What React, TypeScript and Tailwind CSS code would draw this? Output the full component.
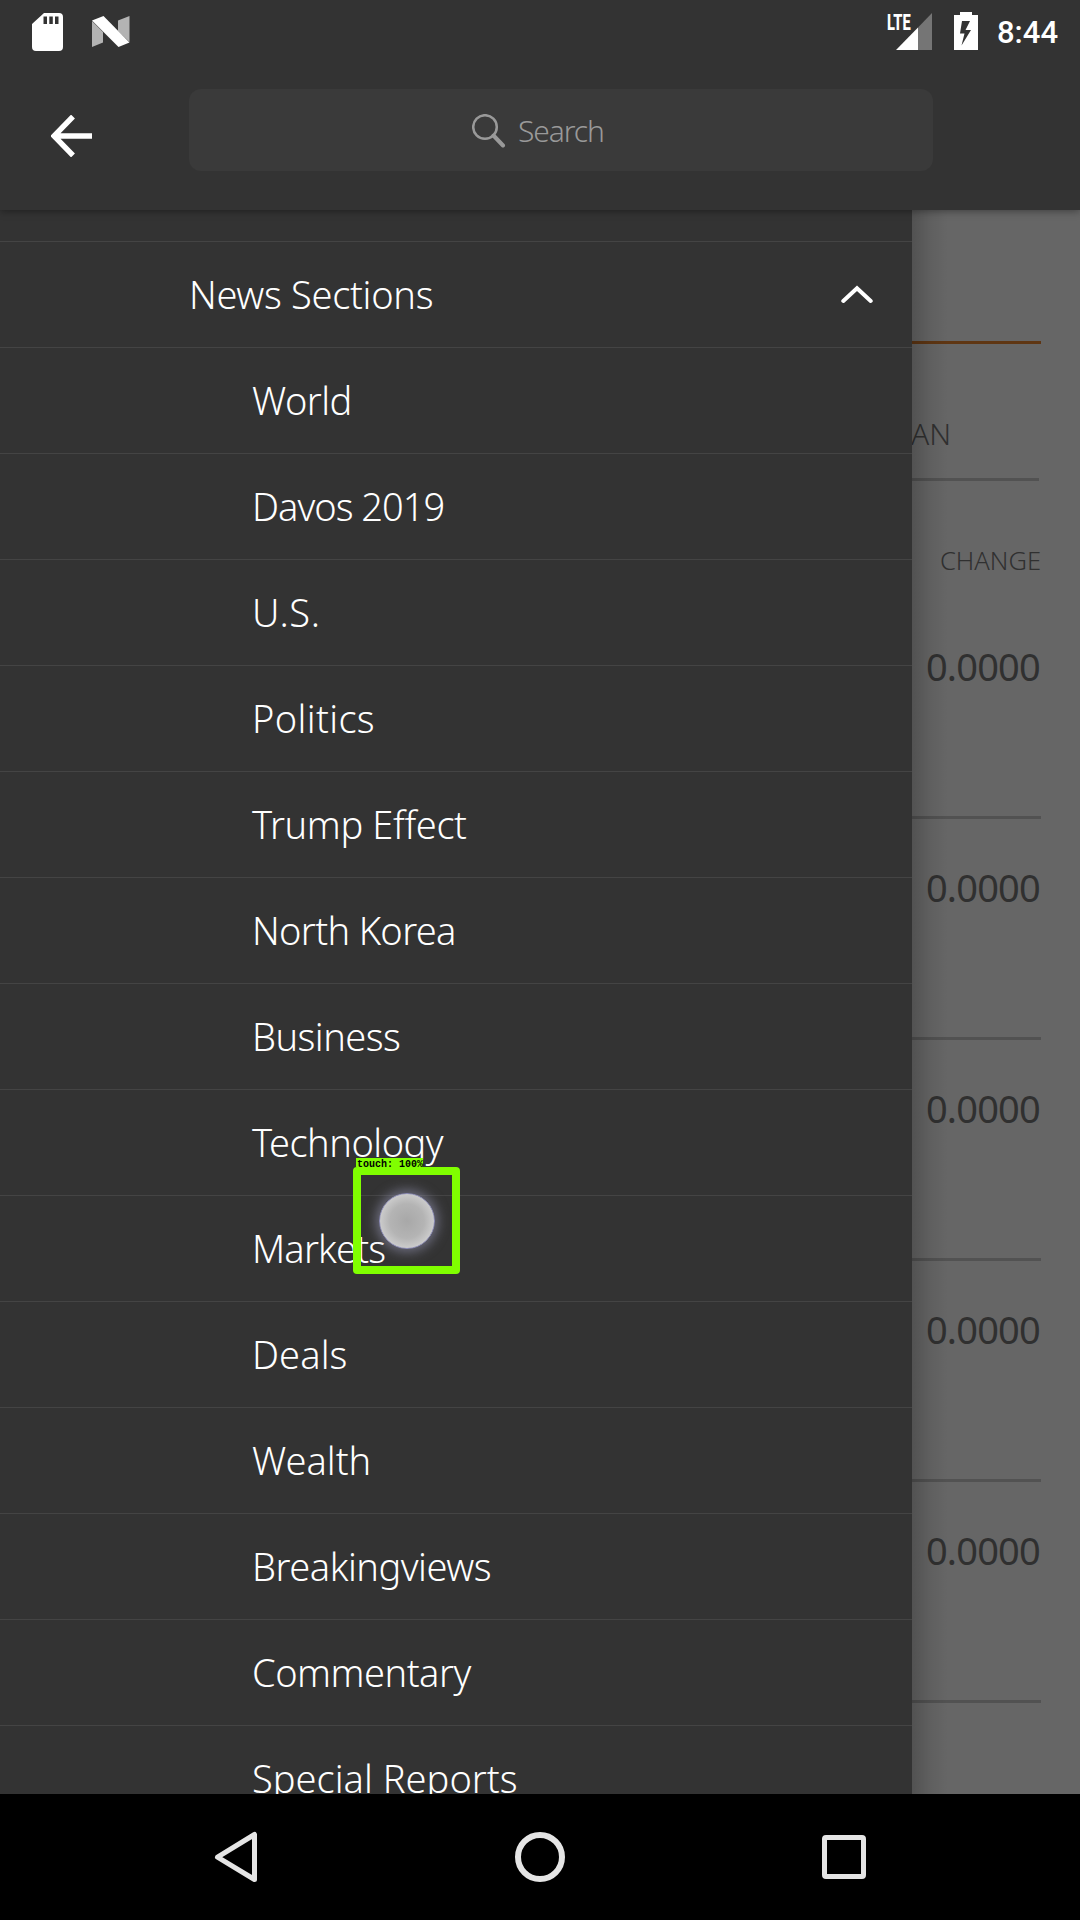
import React from "react";

const sections = [
  { label: "World", tracking: "tracking-[-0.55px]" },
  { label: "Davos 2019", tracking: "tracking-[-1px]" },
  { label: "U.S.", tracking: "tracking-[0.7px]" },
  { label: "Politics", tracking: "tracking-[0.35px]" },
  { label: "Trump Effect", tracking: "tracking-[-0.36px]" },
  { label: "North Korea", tracking: "tracking-[-0.65px]" },
  { label: "Business", tracking: "tracking-[-0.55px]" },
  { label: "Technology", tracking: "tracking-[-0.5px]" },
  { label: "Markets", tracking: "tracking-[-0.8px]" },
  { label: "Deals", tracking: "tracking-[0.1px]" },
  { label: "Wealth", tracking: "tracking-[0px]" },
  { label: "Breakingviews", tracking: "tracking-[-0.48px]" },
  { label: "Commentary", tracking: "tracking-[-0.5px]" },
  { label: "Special Reports", tracking: "tracking-[0.03px]" },
];

function StatusBar() {
  return (
    <div className="flex h-[64px] shrink-0 items-start justify-between pl-8 pr-[22px]">
      <div className="flex">
        <svg className="mt-[13px] h-[38px] w-[31px]" viewBox="0 0 31 38">
          <path
            fill="#fff"
            fillRule="evenodd"
            d="M12 0H27Q31 0 31 4V34Q31 38 27 38H4Q0 38 0 34V11ZM11.500 3.500V11H15V3.500ZM17.300 3.500V11H20.800V3.500ZM23 3.500V11H26.500V3.500Z"
          />
        </svg>
        <svg className="ml-[29px] mt-4 h-[31px] w-[38px]" viewBox="0 0 38 31">
          <path fill="#b3b3b3" d="M0 5L11 16V26.500L0 31ZM26 4.500L37.500 0V26L26 15Z" />
          <path fill="#fff" d="M0 4.500L11.500 0L37.500 26.500L26.500 31Z" />
        </svg>
      </div>
      <div className="flex">
        <div className="relative mt-[13px] h-[37px] w-[45px]">
          <span className="absolute left-0 top-[1px] origin-left scale-x-[0.65] font-['Roboto'] text-[22.500px] font-extrabold leading-[16px] text-white">
            LTE
          </span>
          <svg className="absolute left-[9px] top-0 h-[37px] w-[36px]" viewBox="0 0 36 37">
            <path fill="#757575" d="M36 0V37H22V14.400Z" />
            <path fill="#fff" d="M22 14.400V37H0Z" />
          </svg>
        </div>
        <svg className="ml-[22px] mt-3 h-[38px] w-6" viewBox="0 0 24 38">
          <path
            fill="#fff"
            fillRule="evenodd"
            d="M6 0H18V3H24V38H0V3H6ZM8 9L6 21.500H10.500L7.500 33.500L17 18H11.500L16 9Z"
          />
        </svg>
        <span className="ml-[19px] mt-[13px] font-['Roboto'] text-[31px] font-medium leading-[40px] text-white">
          8:44
        </span>
      </div>
    </div>
  );
}

function Header() {
  return (
    <header className="relative z-20 flex h-[210px] shrink-0 flex-col bg-[#333] shadow-[0_1px_8px_rgba(0,0,0,0.4)]">
      <StatusBar />
      <div className="flex items-start pl-[51px]">
        <svg className="mt-[51px] h-[42px] w-[42px]" viewBox="0 0 42 42">
          <path d="M22 1.500L3 21L22 40.500M3 21H41" fill="none" stroke="#fff" strokeWidth="5.400" />
        </svg>
        <div className="ml-[96px] mt-[25px] flex h-[82px] w-[744px] items-start rounded-[12px] bg-[#3a3a3a] pl-[283px]">
          <svg className="mt-[25px] h-[34px] w-[34px]" viewBox="0 0 34 34">
            <circle cx="13" cy="13" r="11.800" fill="none" stroke="#999" strokeWidth="2.500" />
            <path d="M21.500 21.500L31 31.500" stroke="#999" strokeWidth="4" strokeLinecap="round" />
          </svg>
          <span className="ml-[12px] mt-[22px] text-[30px] font-light leading-[40px] tracking-[-1.1px] text-[#999]">
            Search
          </span>
        </div>
      </div>
    </header>
  );
}

function Drawer() {
  return (
    <nav className="relative z-10 w-[912px] shrink-0 overflow-hidden bg-[#333] text-[38px] font-light text-white">
      <div className="h-8 border-b border-[#444]" />
      <div className="flex h-[106px] items-center justify-between border-b border-[#444] pl-[189px] pr-[39px]">
        <span className="tracking-[-0.3px]">News Sections</span>
        <svg className="mb-[1px] h-5 w-[32px]" viewBox="0 0 32 20">
          <path d="M2.300 17L16 4.300L29.700 17" fill="none" stroke="#fff" strokeWidth="4" strokeLinecap="round" />
        </svg>
      </div>
      {sections.map(({ label, tracking }) => (
        <div key={label} className="flex h-[106px] items-center border-b border-[#444] pl-[252px]">
          <span className={tracking}>{label}</span>
        </div>
      ))}
    </nav>
  );
}

function MarketsPage() {
  return (
    <section className="flex-1 overflow-hidden pr-[39px] text-[#303030]">
      <div className="mt-[131px] h-[3px] bg-[#5f3613]" />
      <div className="-ml-[1px] mt-[70px] text-[30px] font-light leading-[40px]">AN</div>
      <div className="mr-[2px] mt-[24px] h-[3px] bg-[#525252]" />
      <div className="mt-[59px] text-right text-[25.500px] font-light leading-[40px]">CHANGE</div>
      <div className="mt-[18px]">
        {[0, 1, 2, 3, 4].map((row) => (
          <div key={row} className="h-[221px] border-b-[3px] border-[#525252] pr-[1px] pt-[48px] text-right text-[38px] leading-[40px] tracking-[-0.8px]">
            0.0000
          </div>
        ))}
      </div>
    </section>
  );
}

function TouchMarker() {
  return (
    <div className="absolute left-[353px] top-[1158px] z-30 w-[107px]">
      <div className="relative z-10 ml-[3px] h-[9px] w-[67px] whitespace-nowrap bg-[#80ff00] pl-[1px] font-['Liberation_Mono'] text-[10px] font-bold leading-[14px] text-black">
        touch: 100%
      </div>
      <div className="flex h-[107px] items-center justify-center rounded-[4px] border-8 border-[#80ff00]">
        <div className="ml-[1px] h-[56px] w-[56px] rounded-full border border-[#8e8eb8] bg-[radial-gradient(circle,#a8a8a8_0%,#b4b4b4_45%,#cfcfcf_75%)] shadow-[0_0_12px_3px_rgba(150,150,180,0.6)]" />
      </div>
    </div>
  );
}

function NavigationBar() {
  return (
    <footer className="relative z-20 flex h-[126px] shrink-0 items-start bg-black pl-[214px]">
      <svg className="mt-[37px] h-[52px] w-11" viewBox="0 0 44 52">
        <path d="M40.500 3.500V48.500L3.500 26.200Z" fill="none" stroke="#e5e5e5" strokeWidth="5" strokeLinejoin="round" />
      </svg>
      <div className="ml-[257px] mt-[38px] h-[50px] w-[50px] rounded-full border-[6px] border-[#e5e5e5]" />
      <div className="ml-[257px] mt-[41px] h-11 w-11 rounded-[4px] border-[5px] border-[#e5e5e5]" />
    </footer>
  );
}

export default function App() {
  return (
    <div className="relative flex h-[1920px] w-[1080px] flex-col overflow-hidden bg-[#666] font-['Noto_Sans',sans-serif]">
      <Header />
      <main className="relative flex min-h-0 flex-1 overflow-hidden">
        <Drawer />
        <MarketsPage />
        <div className="absolute inset-y-0 left-[912px] w-[36px] bg-linear-to-r from-black/20 via-black/7 to-transparent" />
      </main>
      <TouchMarker />
      <NavigationBar />
    </div>
  );
}
